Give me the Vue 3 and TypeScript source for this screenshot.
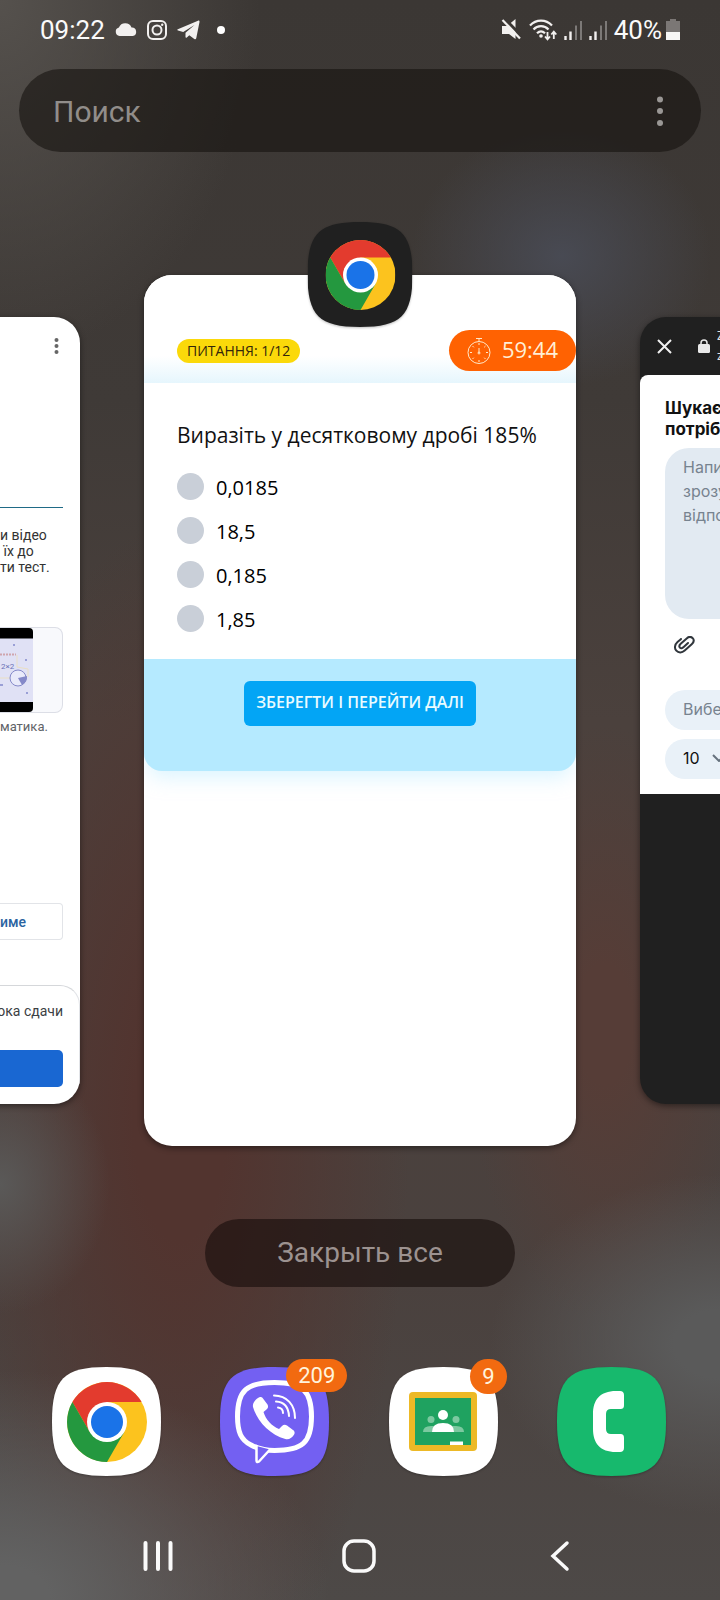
<script setup lang="ts">
import { ref } from 'vue'

const query = ref('')
const picked = ref<string | null>(null)
const points = ref('10')

const answers: string[] = ['0,0185', '18,5', '0,185', '1,85']
const taskLines: string[] = ['и відео', '\u00a0їх до', 'ти тест.']
const hint = 'Напи\nзрозу\nвідпо'
</script>

<template>
  <div class="screen">
    <svg class="defs" aria-hidden="true">
      <symbol id="chrome-logo" viewBox="-40 -40 80 80">
        <circle r="40" fill="#fcc31e" />
        <path d="M-34.6-20A40 40 0 0 1 34.6-20H0V0L-17.3 10Z" fill="#e33b2e" />
        <path d="M-34.6-20A40 40 0 0 0 0 40L17.3 10 0 0-17.3 10Z" fill="#24983f" />
        <circle r="20" fill="#fff" />
        <circle r="16" fill="#1a73e8" />
      </symbol>
      <symbol id="tile" viewBox="0 0 110 110">
        <path d="M55 0C98 0 110 12 110 55S98 110 55 110 0 98 0 55 12 0 55 0Z" />
      </symbol>
    </svg>

    <header class="status">
      <div class="status-side">
        <time class="clock">09:22</time>
        <svg width="22" height="20" viewBox="0 0 22 20" fill="#f2f0ef">
          <path d="M4.500 16a4.300 4.300 0 0 1-.6-8.400A6.800 6.800 0 0 1 16.500 7.500a4.300 4.300 0 0 1 1.200 8.500Z" />
        </svg>
        <svg width="20" height="20" viewBox="0 0 20 20" fill="none" stroke="#f2f0ef" stroke-width="2">
          <rect x="1" y="1" width="18" height="18" rx="5" />
          <circle cx="10" cy="10" r="4.500" />
          <circle cx="15.200" cy="4.800" r="1.200" fill="#f2f0ef" stroke="none" />
        </svg>
        <svg width="23" height="20" viewBox="0 0 23 20" fill="#f2f0ef">
          <path d="M.8 9.300 21 .7c1-.4 1.700.2 1.500 1.300L19.300 18c-.2 1.200-1 1.500-2 .9l-5-3.700-2.500 2.400c-.6.500-1.300.3-1.300-.5v-4.300L17.500 5 6.200 12 1 10.500c-.8-.3-.9-.9-.2-1.200Z" />
        </svg>
        <span class="more-dot"></span>
      </div>
      <div class="status-side tight">
        <svg width="21" height="22" viewBox="0 0 21 22">
          <path d="M1 7h5l8.500-7v20L8 15H1Z" fill="#f2f0ef" />
          <path d="M3 -1 21 17.500" stroke="#3b3734" stroke-width="3" />
          <path d="M1.500 1 19 19.500" stroke="#f2f0ef" stroke-width="2.200" />
        </svg>
        <svg width="28" height="22" viewBox="0 0 28 22" fill="none" stroke="#f2f0ef">
          <path d="M1 6.500C7 0 17 0 23 6.500M4.500 10.500c4-4.500 11-4.500 15 0M8 14.300c2.500-2.500 5.500-2.500 8 0" stroke-width="2.200" />
          <circle cx="12" cy="17" r="1.800" fill="#f2f0ef" stroke="none" />
          <path d="M18.500 13v7M16 17.500l2.500 2.800 2.500-2.800M24.800 20v-7M22.300 15.500l2.500-2.800 2.500 2.800" stroke-width="1.800" />
        </svg>
        <svg v-for="n in 2" :key="n" class="signal" width="18" height="20" viewBox="0 0 18 20">
          <path d="M1.500 16v4M6.500 11.500V20" stroke="#f2f0ef" stroke-width="2.400" />
          <path d="M12 5.500V20M17 1V20" stroke="#7c7977" stroke-width="2" />
        </svg>
        <span class="clock battery-level">40%</span>
        <svg width="14" height="21" viewBox="0 0 14 21">
          <path d="M4 0h6v2h4v11H0V2h4Z" fill="#7b7775" />
          <path d="M0 13h14v8H0Z" fill="#f7f6f5" />
        </svg>
      </div>
    </header>

    <form class="search" role="search" @submit.prevent>
      <input v-model="query" type="text" placeholder="Поиск" aria-label="Поиск" />
      <button type="button" class="bare" aria-label="Меню">
        <svg width="6" height="30" viewBox="0 0 6 30" fill="#9a9795">
          <circle cx="3" cy="3.500" r="3" /><circle cx="3" cy="15" r="3" /><circle cx="3" cy="27" r="3" />
        </svg>
      </button>
    </form>

    <main class="recents">
      <section class="card side left">
        <div class="peek">
          <button type="button" class="bare kebab" aria-label="Меню">
            <svg width="5" height="18" viewBox="0 0 5 18" fill="#666">
              <circle cx="2.500" cy="3" r="2" /><circle cx="2.500" cy="9" r="2" /><circle cx="2.500" cy="15" r="2" />
            </svg>
          </button>
          <p class="task">
            <span v-for="line in taskLines" :key="line">{{ line }}</span>
          </p>
          <div class="attachment">
            <svg class="thumb" width="33" height="84" viewBox="0 0 33 84">
              <path d="M0 0H29Q33 0 33 4V80Q33 84 29 84H0Z" fill="#000" />
              <path d="M0 10.500H33V74H0Z" fill="#e0e1f5" />
              <path d="M0 26.500H16" stroke="#cfa5ad" stroke-width="2" stroke-dasharray="2 1" />
              <path d="M17 27v12l11 2v8M0 50h10" stroke="#eadfc4" fill="none" />
              <circle cx="18" cy="50" r="8" fill="#e9eafa" stroke="#8589c9" />
              <path d="M18 50l9-2a9 9 0 0 1-5 9Z" fill="#8589c9" />
              <path d="M13 17h2M25 32h2M26 65h2M0 57h3" stroke="#9a9fd6" stroke-width="2" />
              <text x="1" y="41" font-size="8" fill="#6c72b8" font-family="Roboto, sans-serif">2×2</text>
            </svg>
          </div>
          <p class="caption">матика.</p>
          <button type="button" class="outlined">име</button>
          <div class="sheet">
            <p>ока сдачи</p>
            <button type="button" class="submit" aria-label="Сдать"></button>
          </div>
        </div>
      </section>

      <section class="card current">
        <div class="app-icon">
          <svg class="tile-bg" width="105" height="105" fill="#202020"><use href="#tile" /></svg>
          <svg class="glyph" width="70" height="70"><use href="#chrome-logo" /></svg>
        </div>
        <div class="quiz-head">
          <span class="counter">ПИТАННЯ: 1/12</span>
          <span class="timer">
            <svg width="24" height="28" viewBox="0 0 24 28" fill="none" stroke="#ffe9c9">
              <circle cx="12" cy="15.500" r="11" />
              <path d="M9 1.500h6M12 1.500v3M12 11v5M12 6v2M12 23v2M3 15.500h2M19 15.500h2M5.500 9l1.300 1.300M18.500 9l-1.300 1.300M5.500 22l1.300-1.300M18.500 22l-1.300-1.300" />
              <circle cx="12" cy="16" r="1" />
            </svg>
            <time>59:44</time>
          </span>
        </div>
        <fieldset class="question">
          <legend>Виразіть у десятковому дробі 185%</legend>
          <label v-for="answer in answers" :key="answer">
            <input v-model="picked" type="radio" name="answer" :value="answer" />
            <span>{{ answer }}</span>
          </label>
        </fieldset>
        <div class="quiz-foot">
          <button type="button">ЗБЕРЕГТИ І ПЕРЕЙТИ ДАЛІ</button>
        </div>
      </section>

      <section class="card side right">
        <div class="tab-bar">
          <button type="button" class="bare" aria-label="Закрыть">
            <svg width="15" height="15" viewBox="0 0 15 15" fill="none" stroke="#f0f0f0" stroke-width="2">
              <path d="M1 1 14 14M14 1 1 14" />
            </svg>
          </button>
          <svg width="12" height="14" viewBox="0 0 12 14">
            <rect y="5" width="12" height="9" rx="1.500" fill="#e8e8e8" />
            <path d="M3 6V4a3 3 0 0 1 6 0v2" fill="none" stroke="#e8e8e8" stroke-width="1.500" />
          </svg>
          <div class="site"><span>Z</span><span>z</span></div>
        </div>
        <div class="ask">
          <h2>Шукає<br />потріб</h2>
          <textarea :placeholder="hint" aria-label="Питання"></textarea>
          <button type="button" class="bare clip" aria-label="Додати файл">
            <svg width="21" height="18" viewBox="0 0 21 18" fill="none" stroke="#30363c" stroke-width="2" stroke-linecap="round">
              <path d="M6.500 3.500 3.500 6c-3 2.700-3.200 6.500-1.200 8.700 2.200 2.400 5.700 2.300 8.400-.2l7-6.300c2.200-2 2.500-4.300 1-6-1.600-1.700-4-1.600-6 .2l-6 5.400c-1.500 1.400-1.700 2.800-.8 3.800s2.400.8 3.800-.5L14 7M6.500 3.500 7 3" />
            </svg>
          </button>
          <input class="field" type="text" placeholder="Вибе" aria-label="Предмет" />
          <div class="field points">
            <select v-model="points" aria-label="Бали">
              <option>10</option>
            </select>
            <svg width="14" height="8" viewBox="0 0 14 8" fill="none" stroke="#66727e" stroke-width="2">
              <path d="M1 1l6 6 6-6" />
            </svg>
          </div>
        </div>
      </section>
    </main>

    <button type="button" class="close-all">Закрыть все</button>

    <nav class="dock" aria-label="Приложения">
      <button type="button" class="bare app" aria-label="Chrome">
        <svg class="tile-bg" width="109" height="109" fill="#fff"><use href="#tile" /></svg>
        <svg class="glyph" width="80" height="80"><use href="#chrome-logo" /></svg>
      </button>
      <button type="button" class="bare app" aria-label="Viber">
        <svg class="tile-bg" width="109" height="109" fill="#7360f2"><use href="#tile" /></svg>
        <svg class="glyph" width="109" height="109" viewBox="0 0 109 109" fill="none" stroke="#fff" stroke-linecap="round" stroke-linejoin="round">
          <path d="M54.500 15.500C82 15.500 91.500 23 91.500 49.500S82 83.500 54.500 83.500Q49 83.500 44 82.500 36 81 31 78C21 73 17.500 65 17.500 49.500 17.500 23 27 15.500 54.500 15.500Z" stroke-width="5" />
          <path d="M36.500 79V93.500Q36.500 96 39 94.500L50 82.500" fill="#7360f2" stroke-width="2.500" />
          <path d="M38 31c2-1.500 4-1 5 .5l4.500 6c1 2 .5 4-1 5l-3 2.500c2 7 8 14 15.500 17l3-3c1.500-1.500 3.500-1.500 5-.5l6 4.500c2 1.300 2 3.500.8 5-2 3-5 5-8.500 4C50 68 37 54 33 40c-.7-3.500 2-7 5-9Z" fill="#fff" stroke="none" />
          <path d="M54 28.500C67 28.500 75 38 75 51M56 34.500C64 35 68.500 40 69 49M58 40.500Q63 41 63 46" stroke-width="2" />
        </svg>
        <span class="badge">209</span>
      </button>
      <button type="button" class="bare app" aria-label="Google Класс">
        <svg class="tile-bg" width="109" height="109" fill="#fff"><use href="#tile" /></svg>
        <svg class="glyph" width="109" height="109" viewBox="0 0 109 109">
          <rect x="20" y="25" width="68" height="59" rx="4" fill="#edb926" />
          <rect x="26" y="31" width="56" height="47" fill="#1fa260" />
          <g fill="#7cc9a0">
            <circle cx="42" cy="52.500" r="3.500" /><circle cx="67" cy="52.500" r="3.500" />
            <path d="M34 65q0-6 8-6h25q8 0 8 6Z" />
          </g>
          <circle cx="54" cy="48" r="5" fill="#fff" />
          <path d="M43 65q0-9 11-9t11 9Z" fill="#fff" />
          <path d="M61 74.500H74V78H61Z" fill="#fff" />
        </svg>
        <span class="badge single">9</span>
      </button>
      <button type="button" class="bare app" aria-label="Телефон">
        <svg class="tile-bg" width="109" height="109" fill="#17b96d"><use href="#tile" /></svg>
        <svg class="glyph" width="109" height="109" viewBox="0 0 109 109">
          <path d="M59 24h4c2.500 0 4 1.500 4 4v10c0 3-1 4-4 4h-9q-5 0-5 5v15q0 5 5 5h9c3 0 4 1 4 4v10c0 2.500-1.500 4-4 4h-4C43 85 36 76 36 62V47C36 33 43 24 59 24Z" fill="#fff" />
        </svg>
      </button>
    </nav>

    <nav class="system" aria-label="Навигация">
      <button type="button" class="bare" aria-label="Недавние">
        <svg width="30" height="32" viewBox="0 0 30 32" stroke="#fafafa" stroke-width="4" stroke-linecap="round">
          <path d="M2.500 3v26M15 3v26M27.500 3v26" />
        </svg>
      </button>
      <button type="button" class="bare" aria-label="Домой">
        <svg width="34" height="34" viewBox="0 0 34 34" fill="none" stroke="#fafafa" stroke-width="3.500">
          <rect x="2" y="2" width="30" height="30" rx="10" />
        </svg>
      </button>
      <button type="button" class="bare" aria-label="Назад">
        <svg width="20" height="32" viewBox="0 0 20 32" fill="none" stroke="#fafafa" stroke-width="3.500" stroke-linecap="round">
          <path d="M17 3 3 16 17 29" />
        </svg>
      </button>
    </nav>
  </div>
</template>

<style>
html,
body {
  margin: 0;
  background: #47403d;
}
</style>

<style scoped>
.screen {
  min-height: 100vh;
  overflow: hidden;
  font-family: Roboto, 'Noto Sans', sans-serif;
  background:
    radial-gradient(ellipse 150px 130px at 78% 16%, rgba(74, 77, 88, 0.85), transparent),
    radial-gradient(ellipse 260px 360px at 0% 0%, #55514d, transparent),
    radial-gradient(ellipse 230px 170px at 100% 84%, #5a5a5a 20%, transparent),
    radial-gradient(ellipse 330px 230px at 0% 100%, #626262 15%, transparent),
    radial-gradient(ellipse 110px 130px at 0% 74%, #5a5958, transparent),
    radial-gradient(ellipse 230px 600px at 25% 70%, #52342f 20%, transparent),
    radial-gradient(ellipse 140px 300px at 84% 64%, #563d37 20%, transparent),
    linear-gradient(#3b3734, #3f3a37 25%, #4b413d 45%, #4a413e 80%, #4d4947);
}

.defs {
  position: absolute;
  width: 0;
  height: 0;
}

svg {
  display: block;
  flex: none;
}

p,
h2 {
  margin: 0;
}

.bare {
  display: flex;
  align-items: center;
  justify-content: center;
  padding: 0;
  border: 0;
  background: none;
  font: inherit;
}

.status {
  display: flex;
  justify-content: space-between;
  align-items: center;
  height: 69px;
  box-sizing: border-box;
  padding: 0 40px 10px;
}

.status-side {
  display: flex;
  align-items: center;
  gap: 10px;
}

.status-side.tight {
  gap: 7px;
}

.clock {
  font-size: 26px;
  line-height: 30px;
  color: #fafafa;
}

.battery-level {
  margin-right: -3px;
}

.more-dot {
  width: 8px;
  height: 8px;
  margin-left: 7px;
  border-radius: 50%;
  background: #fff;
}

.search {
  display: flex;
  align-items: center;
  height: 83px;
  margin: 0 19px;
  padding: 0 38px 0 34px;
  border-radius: 42px;
  background: rgba(22, 18, 15, 0.6);
}

.search input {
  flex: 1;
  min-width: 0;
  padding: 2px 0 0;
  border: 0;
  outline: 0;
  background: none;
  font: 30px/36px Roboto, sans-serif;
  color: #eee;
}

.search input::placeholder {
  color: #918d8a;
  opacity: 1;
}

.recents {
  display: flex;
  justify-content: center;
  align-items: center;
  gap: 64px;
  margin-top: 123px;
}

.card {
  position: relative;
  box-sizing: border-box;
  flex: none;
  background: #fff;
  box-shadow: 0 2px 6px rgba(0, 0, 0, 0.45);
}

.side {
  width: 54%;
  min-height: 787px;
  border-radius: 26px;
  overflow: hidden;
}

.current {
  width: 60%;
  min-height: 871px;
  border-radius: 28px;
}

/* left card */
.left {
  display: flex;
  justify-content: flex-end;
}

.peek {
  display: flex;
  flex-direction: column;
  width: 80px;
}

.kebab {
  height: 58px;
  margin: 0 21px 0 auto;
}

.task {
  margin: 132px 17px 0 0;
  padding-top: 19px;
  border-top: 1px solid #1f6a86;
  font-size: 14px;
  line-height: 16px;
  color: #333;
  white-space: nowrap;
}

.task span {
  display: block;
}

.attachment {
  margin: 52px 17px 0 0;
  border: 1px solid #dcdee6;
  border-left: 0;
  border-radius: 0 8px 8px 0;
  background: #f8f9fc;
}

.caption {
  margin-top: 6px;
  font-size: 13px;
  line-height: 16px;
  color: #5f6368;
}

.outlined {
  height: 37px;
  margin: 168px 17px 0 0;
  padding: 0;
  border: 1px solid #e2e4e8;
  border-left: 0;
  border-radius: 0 4px 4px 0;
  background: #fff;
  font: 500 14px/20px Roboto, sans-serif;
  color: #2a63a0;
  text-align: left;
}

.sheet {
  margin-top: 45px;
  padding: 15px 16px 16px 0;
  border-top: 1px solid #d5d7da;
  border-right: 1px solid #e2e4e8;
  border-radius: 0 20px 0 0;
  font-size: 14px;
  line-height: 20px;
  color: #3c4043;
  white-space: nowrap;
}

.sheet p {
  display: flex;
  justify-content: flex-end;
}

.submit {
  display: block;
  width: 100%;
  height: 37px;
  margin-top: 29px;
  border: 0;
  border-radius: 0 5px 5px 0;
  background: #1967d2;
}

/* current card */
.app-icon {
  position: absolute;
  top: -53px;
  left: 50%;
  display: grid;
  place-items: center;
  transform: translateX(-50%);
}

.app-icon > *,
.app > svg {
  grid-area: 1 / 1;
}

.tile-bg {
  filter: drop-shadow(0 1px 1px rgba(0, 0, 0, 0.25));
}

.glyph {
  z-index: 1;
}

.current,
.current button {
  font-family: 'Open Sans', 'Noto Sans', sans-serif;
}

.quiz-head {
  display: flex;
  align-items: center;
  justify-content: space-between;
  box-sizing: border-box;
  height: 108px;
  padding: 46px 0 0 33px;
  border-radius: 28px 28px 0 0;
  background: linear-gradient(#fff 75%, #e6f6fd);
}

.counter {
  margin-bottom: 3px;
  padding: 0 10px;
  border-radius: 12px;
  background: #fbd90a;
  font-size: 14px;
  line-height: 24px;
  color: #33260a;
}

.timer {
  display: flex;
  align-items: center;
  gap: 11px;
  height: 41px;
  margin-bottom: 3px;
  padding: 0 18px;
  border-radius: 21px;
  background: #ff6202;
  font-size: 22px;
  line-height: 36px;
  color: #ffefd6;
}

.timer time {
  padding-bottom: 4px;
}

.question {
  margin: 0;
  padding: 37px 33px 19px;
  border: 0;
}

.question legend {
  float: left;
  width: 100%;
  padding: 0;
  margin-bottom: 14px;
  font-size: 21px;
  line-height: 30px;
  color: #111;
  white-space: nowrap;
}

.question label {
  display: flex;
  clear: both;
  align-items: center;
  gap: 12px;
  height: 44px;
  font-size: 20px;
  line-height: 28px;
  color: #000;
}

.question label span {
  padding-top: 3px;
}

.question input {
  appearance: none;
  flex: none;
  width: 27px;
  height: 27px;
  margin: 0;
  border-radius: 50%;
  background: #c9cfd8;
}

.question input:checked {
  border: 8px solid #03a5f5;
}

.quiz-foot {
  display: flex;
  justify-content: center;
  align-items: flex-start;
  padding: 22px 0 45px;
  border-radius: 0 0 18px 18px;
  background: #b5eaff;
  box-shadow: 0 10px 20px -4px rgba(181, 234, 255, 0.5);
  clip-path: inset(0 0 -40px 0);
}

.quiz-foot button {
  padding: 0 12px 4px;
  height: 45px;
  border: 0;
  border-radius: 6px;
  background: #03a5f5;
  font-size: 16px;
  font-weight: 600;
  line-height: 20px;
  color: #e9fbff;
  white-space: nowrap;
}

/* right card */
.right {
  background: #202020;
}

.tab-bar {
  display: flex;
  align-items: center;
  gap: 26px;
  height: 58px;
  padding-left: 17px;
}

.site {
  display: flex;
  flex-direction: column;
  margin-left: -19px;
  font-size: 12px;
  line-height: 20px;
  color: #e0e0e0;
}

.ask {
  box-sizing: border-box;
  padding: 23px 25px 15px;
  border-radius: 8px 8px 0 0;
  background: #fff;
  font-family: Inter, sans-serif;
}

.ask h2 {
  font-size: 17px;
  font-weight: 700;
  line-height: 21px;
  color: #111;
}

.ask textarea {
  display: block;
  box-sizing: border-box;
  width: 100%;
  height: 171px;
  margin-top: 8px;
  padding: 7px 18px;
  border: 0;
  border-radius: 24px;
  resize: none;
  background: #e2eaf2;
  font: 16px/24px Inter, sans-serif;
}

.ask ::placeholder {
  color: #77838f;
  opacity: 1;
}

.clip {
  height: 18px;
  margin: 17px 0 36px 9px;
}

.field {
  display: flex;
  align-items: center;
  box-sizing: border-box;
  width: 100%;
  height: 40px;
  padding: 0 18px 2px;
  border: 0;
  border-radius: 20px;
  background: #e9f1f8;
  font: 16px/24px Inter, sans-serif;
}

.points {
  gap: 12px;
  margin-top: 9px;
}

.points select {
  appearance: none;
  padding: 0;
  border: 0;
  background: none;
  font: inherit;
  color: #111;
}

.close-all {
  display: block;
  width: 43%;
  height: 68px;
  margin: 73px auto 80px;
  border: 0;
  border-radius: 34px;
  background: rgba(22, 12, 10, 0.6);
  font: 28px/34px Roboto, sans-serif;
  color: #9c9290;
}

.dock {
  display: flex;
  justify-content: space-between;
  padding: 0 54px 0 52px;
}

.app {
  position: relative;
  display: grid;
  place-items: center;
}

.badge {
  position: absolute;
  z-index: 2;
  top: -8px;
  right: -18px;
  padding: 0 12px;
  border-radius: 18px;
  background: #f26a10;
  font-size: 22px;
  line-height: 33px;
  color: #fff3dc;
}

.badge.single {
  right: -9px;
  line-height: 35px;
}

.system {
  display: flex;
  justify-content: center;
  height: 89px;
  margin-top: 35px;
  padding-right: 2px;
}

.system button {
  width: 28%;
}
</style>
